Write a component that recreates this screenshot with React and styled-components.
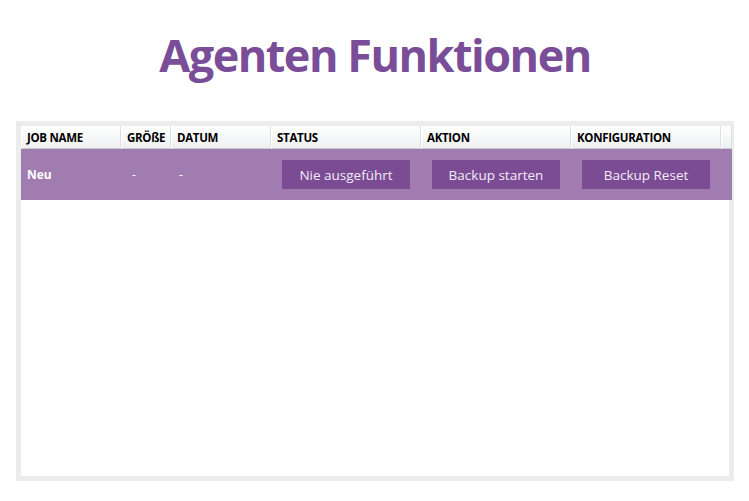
import React from "react";
import styled, { createGlobalStyle } from "styled-components";

const GlobalStyle = createGlobalStyle`
  html, body {
    margin: 0;
    padding: 0;
    background: #ffffff;
  }
  body {
    font-family: "Open Sans", "Noto Sans", sans-serif;
  }
`;

const Page = styled.div`
  display: flex;
  flex-direction: column;
  width: 749px;
  height: 501px;
  box-sizing: border-box;
  padding: 24px 0 0 16px;
`;

const Title = styled.h1`
  margin: 0;
  width: 718px;
  text-align: center;
  font-family: "Open Sans", sans-serif;
  font-weight: 700;
  font-size: 45px;
  line-height: 62px;
  color: #7a4d98;
  letter-spacing: -1.5px;
`;

const Frame = styled.div`
  margin-top: 35px;
  width: 718px;
  height: 360px;
  box-sizing: border-box;
  border: 5px solid #ececec;
  background: #ffffff;
`;

const Grid = styled.div`
  display: grid;
  grid-template-columns: 100px 50px 100px 150px 150px 150px 1fr;
`;

const HeadCell = styled.div`
  height: 23px;
  box-sizing: border-box;
  padding-left: 5px;
  display: flex;
  align-items: center;
  background: linear-gradient(#ffffff, #eef0f2);
  border-left: 1px solid #ffffff;
  border-right: 1px solid #dfe0e1;
  border-bottom: 1px solid #c9cacc;
  font-size: 11.5px;
  font-weight: 700;
  letter-spacing: -0.3px;
  color: #000000;
  white-space: nowrap;
  overflow: hidden;
`;

const BodyCell = styled.div`
  height: 51px;
  box-sizing: border-box;
  display: flex;
  align-items: center;
  padding-left: ${p => p.$pad || 11}px;
  background: #a17cb0;
  color: #ffffff;
  font-size: 12px;
  font-weight: ${p => (p.$bold ? 700 : 400)};
`;

const ActionButton = styled.button`
  width: 128px;
  height: 29px;
  border: none;
  padding: 0;
  background: #7b4b94;
  color: #f3ecf7;
  font-family: "Open Sans", sans-serif;
  font-size: 13.5px;
  cursor: pointer;
`;

const headers = ["JOB NAME", "GRÖßE", "DATUM", "STATUS", "AKTION", "KONFIGURATION", ""];

export default function App() {
  return (
    <>
      <GlobalStyle />
      <Page>
        <Title>Agenten Funktionen</Title>
        <Frame>
          <Grid>
            {headers.map((h, i) => (
              <HeadCell key={i}>{h}</HeadCell>
            ))}
            <BodyCell $pad={6} $bold>Neu</BodyCell>
            <BodyCell $pad={11}>-</BodyCell>
            <BodyCell $pad={8}>-</BodyCell>
            <BodyCell>
              <ActionButton>Nie ausgeführt</ActionButton>
            </BodyCell>
            <BodyCell>
              <ActionButton>Backup starten</ActionButton>
            </BodyCell>
            <BodyCell>
              <ActionButton>Backup Reset</ActionButton>
            </BodyCell>
            <BodyCell />
          </Grid>
        </Frame>
      </Page>
    </>
  );
}
